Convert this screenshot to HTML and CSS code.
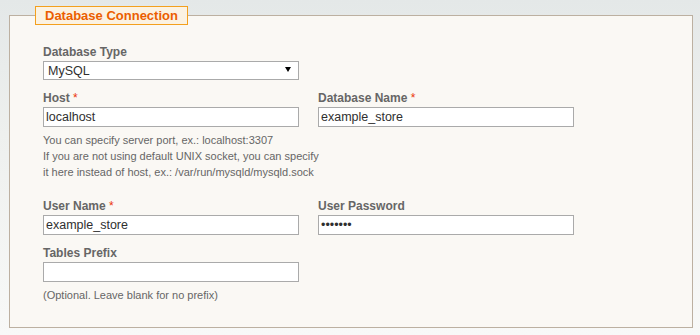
FILE: index.html
```html
<!DOCTYPE html>
<html lang="en">
<head>
    <meta charset="UTF-8">
    <meta name="viewport" content="width=device-width, initial-scale=1.0">
    <title>Database Connection</title>
    <link rel="stylesheet" href="styles.css">
</head>
<body>
    <form class="install-form">
        <fieldset class="box">
            <legend>Database Connection</legend>

            <div class="fields">
                <div class="field">
                    <label for="dbType">Database Type</label>
                    <div class="select-wrap">
                        <select id="dbType" name="db_type">
                            <option>MySQL</option>
                        </select>
                    </div>
                </div>
                <div></div>

                <div class="field">
                    <label for="host">Host <span class="required">*</span></label>
                    <input type="text" id="host" name="host" value="localhost">
                    <p class="note">
                        You can specify server port, ex.: localhost:3307<br>
                        If you are not using default UNIX socket, you can specify<br>
                        it here instead of host, ex.: /var/run/mysqld/mysqld.sock
                    </p>
                </div>
                <div class="field">
                    <label for="dbName">Database Name <span class="required">*</span></label>
                    <input type="text" id="dbName" name="db_name" value="example_store">
                </div>

                <div class="field">
                    <label for="user">User Name <span class="required">*</span></label>
                    <input type="text" id="user" name="user" value="example_store">
                </div>
                <div class="field">
                    <label for="password">User Password</label>
                    <input type="password" id="password" name="password" value="1234567">
                </div>

                <div class="field last">
                    <label for="prefix">Tables Prefix</label>
                    <input type="text" id="prefix" name="prefix">
                    <p class="note">(Optional. Leave blank for no prefix)</p>
                </div>
            </div>
        </fieldset>
    </form>
</body>
</html>
```

FILE: styles.css
```css
* {
    box-sizing: border-box;
    margin: 0;
    padding: 0;
}

body {
    font-family: "Liberation Sans", Arial, sans-serif;
    font-size: 12px;
    color: #666;
    background: linear-gradient(to bottom, #e4e8e8 0%, #eef0ee 40%, #f8f9f8 100%);
    height: 335px;
    padding: 6px 7px 0 9px;
}

.box {
    border: 1px solid #bcb0a1;
    background: #faf8f4;
    padding: 19px 25px 24px 25px;
}

.box legend {
    border: 1px solid #f3a01e;
    background: #fbf2e2;
    color: #eb5e00;
    font-size: 13px;
    font-weight: bold;
    line-height: 17px;
    padding: 0 9px;
}

.fields {
    display: grid;
    grid-template-columns: 256px 256px;
    column-gap: 19px;
    padding-left: 8px;
}

.field {
    margin-bottom: 10px;
}

.field.last {
    margin-bottom: 0;
}

label {
    display: block;
    font-weight: bold;
    line-height: 16px;
    margin-bottom: 1px;
    color: #666;
}

.required {
    color: #eb340a;
    font-weight: normal;
}

input[type="text"],
input[type="password"],
select {
    display: block;
    width: 256px;
    height: 20px;
    border: 1px solid #aaa;
    background: #fff;
    font-family: "Liberation Sans", Arial, sans-serif;
    font-size: 12.5px;
    color: #2f2f2f;
    padding: 0 2px;
    outline: none;
}

.select-wrap {
    position: relative;
}

select {
    height: 19px;
    padding-left: 4px;
    appearance: none;
    -webkit-appearance: none;
    border-radius: 0;
}

.select-wrap::after {
    content: '';
    position: absolute;
    right: 8px;
    top: 6px;
    border-left: 3px solid transparent;
    border-right: 3px solid transparent;
    border-top: 5px solid #000;
    pointer-events: none;
}

.note {
    font-size: 11px;
    line-height: 16px;
    margin-top: 5px;
    padding-bottom: 8px;
    white-space: nowrap;
    color: #666;
}

.field.last .note {
    padding-bottom: 0;
}
```
